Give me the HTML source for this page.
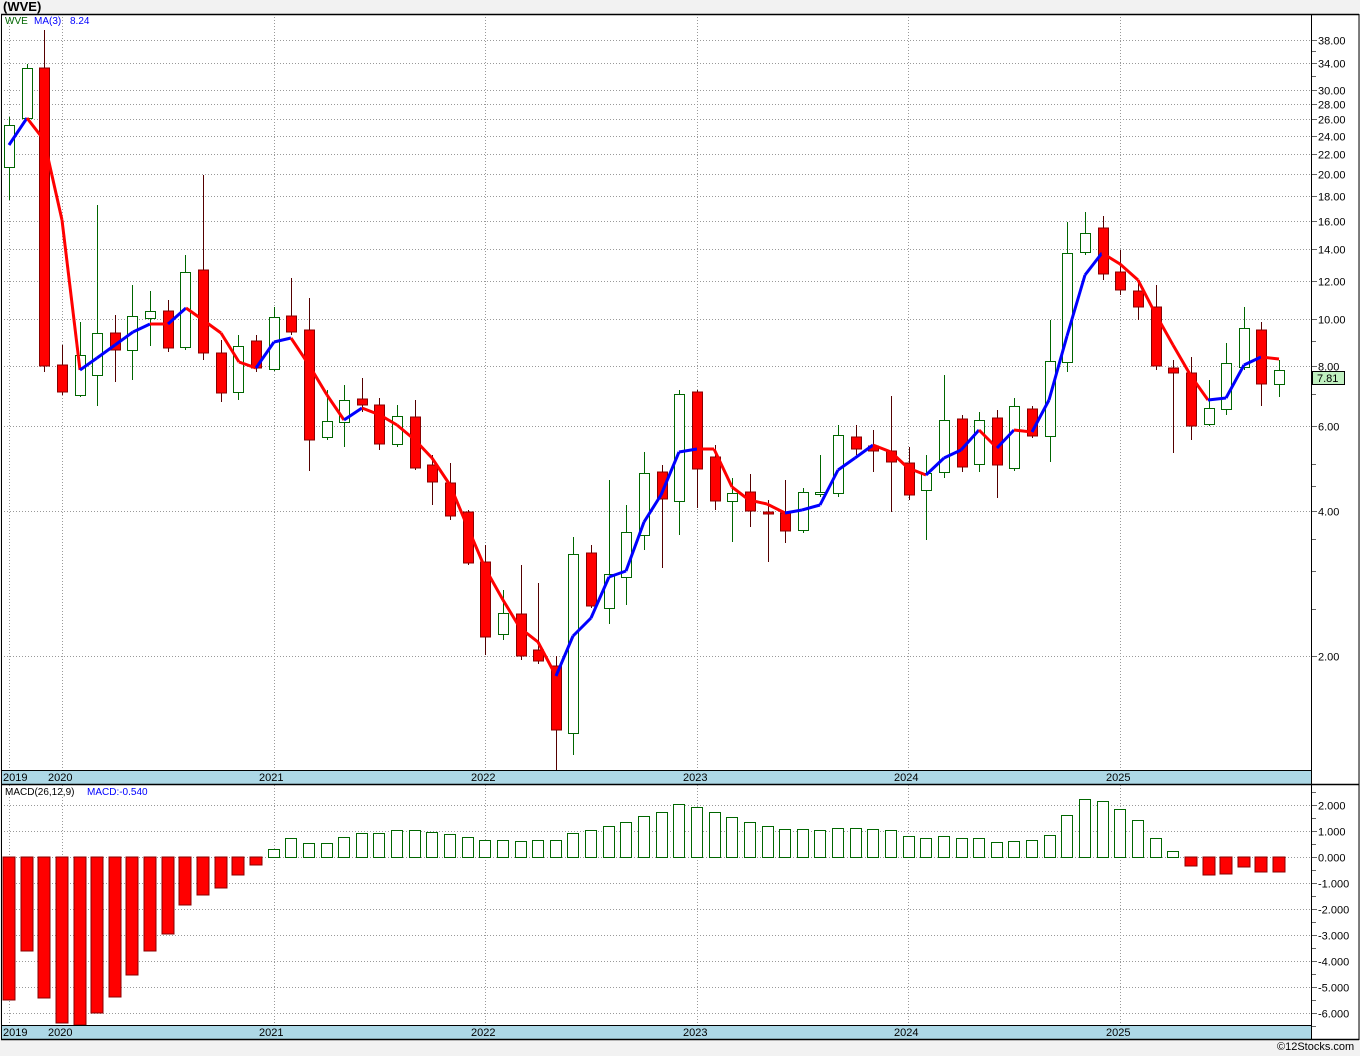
<!DOCTYPE html>
<html><head><meta charset="utf-8">
<style>
html,body{margin:0;padding:0;background:#f2f2f2;}
body{width:1360px;height:1056px;overflow:hidden;position:relative;font-family:"Liberation Sans",sans-serif;}
#t{position:absolute;left:3px;top:-1px;font-size:13px;font-weight:bold;color:#000;}
#c{position:absolute;left:1200px;top:1041px;font-size:12px;color:#000;}
svg{position:absolute;left:0;top:0;}
</style></head><body>
<div id="t">(WVE)</div>
<svg id="s" width="1360" height="1056" xmlns="http://www.w3.org/2000/svg" font-family="Liberation Sans, sans-serif"></svg>
<div id="c" style="left:1277px;font-size:11px">©12Stocks.com</div>
<script>
var s=document.getElementById('s'),h='';
function L(a,b,c,d,st,w,da){h+='<line x1="'+a+'" y1="'+b+'" x2="'+c+'" y2="'+d+'" stroke="'+st+'" stroke-width="'+(w||1)+'"'+(da?' stroke-dasharray="'+da+'"':'')+'/>';}
function R(x,y,w,hh,f,st){h+='<rect x="'+x+'" y="'+y+'" width="'+w+'" height="'+hh+'" fill="'+f+'"'+(st?' stroke="'+st+'"':'')+'/>';}
function T(x,y,t,c,sz,anc){h+='<text x="'+x+'" y="'+y+'" font-size="'+(sz||11)+'" fill="'+(c||'#000')+'"'+(anc?' text-anchor="'+anc+'"':'')+'>'+t+'</text>';}
R(1,14,1358,1026,'#fff');
function py(p){return 656-145*Math.log2(p/2);}
var pl=[38,34,30,28,26,24,22,20,18,16,14,12,10,8,6,4,2];
for(var i=0;i<pl.length;i++){var y=Math.round(py(pl[i]))+0.5;L(1,y,1311,y,'#999',1,'1,2');L(1311,y,1317,y,'#666');T(1318,y+4,pl[i].toFixed(2));}
var mt=[36,32,9,7,5,4.5,3.5,3,2.5];
for(i=0;i<mt.length;i++){var y=Math.round(py(mt[i]))+0.5;L(1311,y,1316,y,'#666');}
var yx=[9,62,274,485,697,908,1120];
for(i=0;i<yx.length;i++){L(yx[i]+.5,14,yx[i]+.5,770,'#999',1,'1,2');L(yx[i]+.5,785,yx[i]+.5,1025,'#999',1,'1,2');}
for(var v=2;v>=-6;v--){var y=857+(-v)*26+0.5;L(1,y,1311,y,'#999',1,'1,2');L(1311,y,1317,y,'#666');T(1318,y+4,(v<0?'-':' ')+Math.abs(v).toFixed(3));}
for(v=2.5;v>=-6.5;v--){var y=Math.round(857-v*26)+0.5;if(y>786&&y<1038)L(1311,y,1316,y,'#666');}
var C=[[125,167,117,200,0],[68,118,64,118,0],[68,366,30,372,1],[365,392,345,395,1],[355,395,322,397,0],[333,375,205,406,0],[333,350,315,382,1],[316,350,285,380,0],[311,318,291,346,0],[311,348,300,352,1],[272,347,255,350,0],[270,353,175,360,1],[353,393,340,402,1],[346,392,335,400,0],[341,368,335,372,1],[317,369,307,371,0],[316,332,278,335,1],[330,440,298,471,1],[421,437,390,440,0],[400,422,385,447,0],[399,405,378,412,1],[405,444,398,450,1],[416,444,405,447,0],[417,468,400,470,1],[465,482,455,505,1],[483,516,463,520,1],[512,563,510,565,1],[562,637,545,655,1],[613,634,590,640,0],[614,656,565,660,1],[650,661,583,664,1],[666,730,656,770,1],[554,733,537,755,0],[553,606,545,608,1],[574,608,480,624,0],[532,577,505,605,0],[473,535,452,550,0],[472,499,465,568,1],[394,501,390,535,0],[392,469,390,508,1],[457,501,445,510,1],[493,501,478,542,0],[492,511,474,527,1],[512,514,500,562,1],[513,531,480,543,1],[492,530,488,533,0],[492,494,455,497,0],[435,493,425,497,0],[437,449,425,455,1],[446,451,430,472,1],[451,462,396,512,1],[463,495,447,500,1],[473,490,455,540,0],[420,472,375,478,0],[419,467,415,472,1],[420,464,412,472,0],[418,465,410,498,1],[406,468,398,471,0],[409,436,406,438,1],[361,436,320,462,0],[253,362,222,372,0],[233,252,212,255,0],[228,274,216,280,1],[272,290,250,295,1],[291,307,280,320,1],[307,366,285,370,1],[368,373,360,453,1],[373,426,357,440,1],[408,424,380,426,0],[363,409,343,415,0],[328,367,307,370,0],[330,384,322,406,1],[370,384,360,397,0]];
function cx(i){return Math.round(9+17.64*i);}
for(i=0;i<C.length;i++){var c=C[i],x=cx(i)+.5;
 if(c[4]){L(x,c[2],x,c[3],'#500');R(x-5,c[0],10,Math.max(1,c[1]-c[0]),'#f00','#800');}
 else{L(x,c[2],x,c[3],'#060');R(x-5,c[0]+.5,10,Math.max(1,c[1]-c[0]),'#fff','#060');}}
var M=[[9,145],[27,118],[44,140],[62,220],[80,370],[97,358],[115,345],[133,332],[150,324],[168,324],[186,308],[203,320],[221,333],[239,362],[256,368],[274,342],[291,338],[309,365],[327,395],[344,420],[362,408],[380,415],[397,425],[415,440],[432,458],[450,485],[468,528],[485,568],[503,600],[520,628],[538,642],[556,676],[573,636],[591,618],[609,577],[626,571],[644,522],[661,495],[679,452],[697,449],[714,449],[732,487],[749,500],[767,504],[785,513],[802,510],[820,505],[838,470],[855,458],[873,445],[891,452],[908,468],[926,475],[944,458],[961,450],[979,430],[997,448],[1014,430],[1032,432],[1049,400],[1067,336],[1085,275],[1102,253],[1120,264],[1138,280],[1155,313],[1173,345],[1191,376],[1208,400],[1226,398],[1244,365],[1261,357],[1279,359]];
for(i=1;i<M.length;i++){var col=M[i][1]<M[i-1][1]?'#00f':'#f00';L(M[i-1][0],M[i-1][1],M[i][0],M[i][1],col,3);}
var H=[1000,951,998,1023,1025,1013,997,975,951,934,905,895,888,875,865,849,838,843,843,837,833,833,830,830,832,834,837,840,840,841,840,840,833,830,826,822,816,812,804,807,812,817,822,826,829,829,830,828,828,829,830,836,838,836,838,838,842,841,840,835,815,799,801,809,820,838,851,866,875,874,867,872,872];
for(i=0;i<H.length;i++){var x=cx(i)-6;if(H[i]>857)R(x,857,12,H[i]-857,'#f00','#800');else R(x+.5,H[i]+.5,11,857-H[i],'#fff','#060');}
R(1,770,1310,14,'#add8e6');L(1,770.5,1311,770.5,'#000');L(1,784.5,1359,784.5,'#000',1.5);
R(1,1025,1310,14,'#add8e6');L(1,1025.5,1311,1025.5,'#000');L(1,1039.5,1359,1039.5,'#000',1.5);
var yl=[['2019',3],['2020',48],['2021',259],['2022',471],['2023',683],['2024',894],['2025',1106]];
for(i=0;i<yl.length;i++){T(yl[i][1],781,yl[i][0]);T(yl[i][1],1036,yl[i][0]);}
L(1311.5,14,1311.5,1040,'#000');L(1.5,14,1.5,1040,'#000');L(1,14.5,1359,14.5,'#000',1.5);L(1359,14,1359,1040,'#000');
T(5,24,'WVE','#060',10);T(34,24,'MA(3)','#00f',10);T(70,24,'8.24','#00f',10);
T(5,795,'MACD(26,12,9)','#000',10);T(87,795,'MACD:-0.540','#00f',10);
R(1312.5,371.5,32,13,'#c0f0c0','#000');T(1317,382,'7.81');
s.innerHTML=h;
</script>
</body></html>
